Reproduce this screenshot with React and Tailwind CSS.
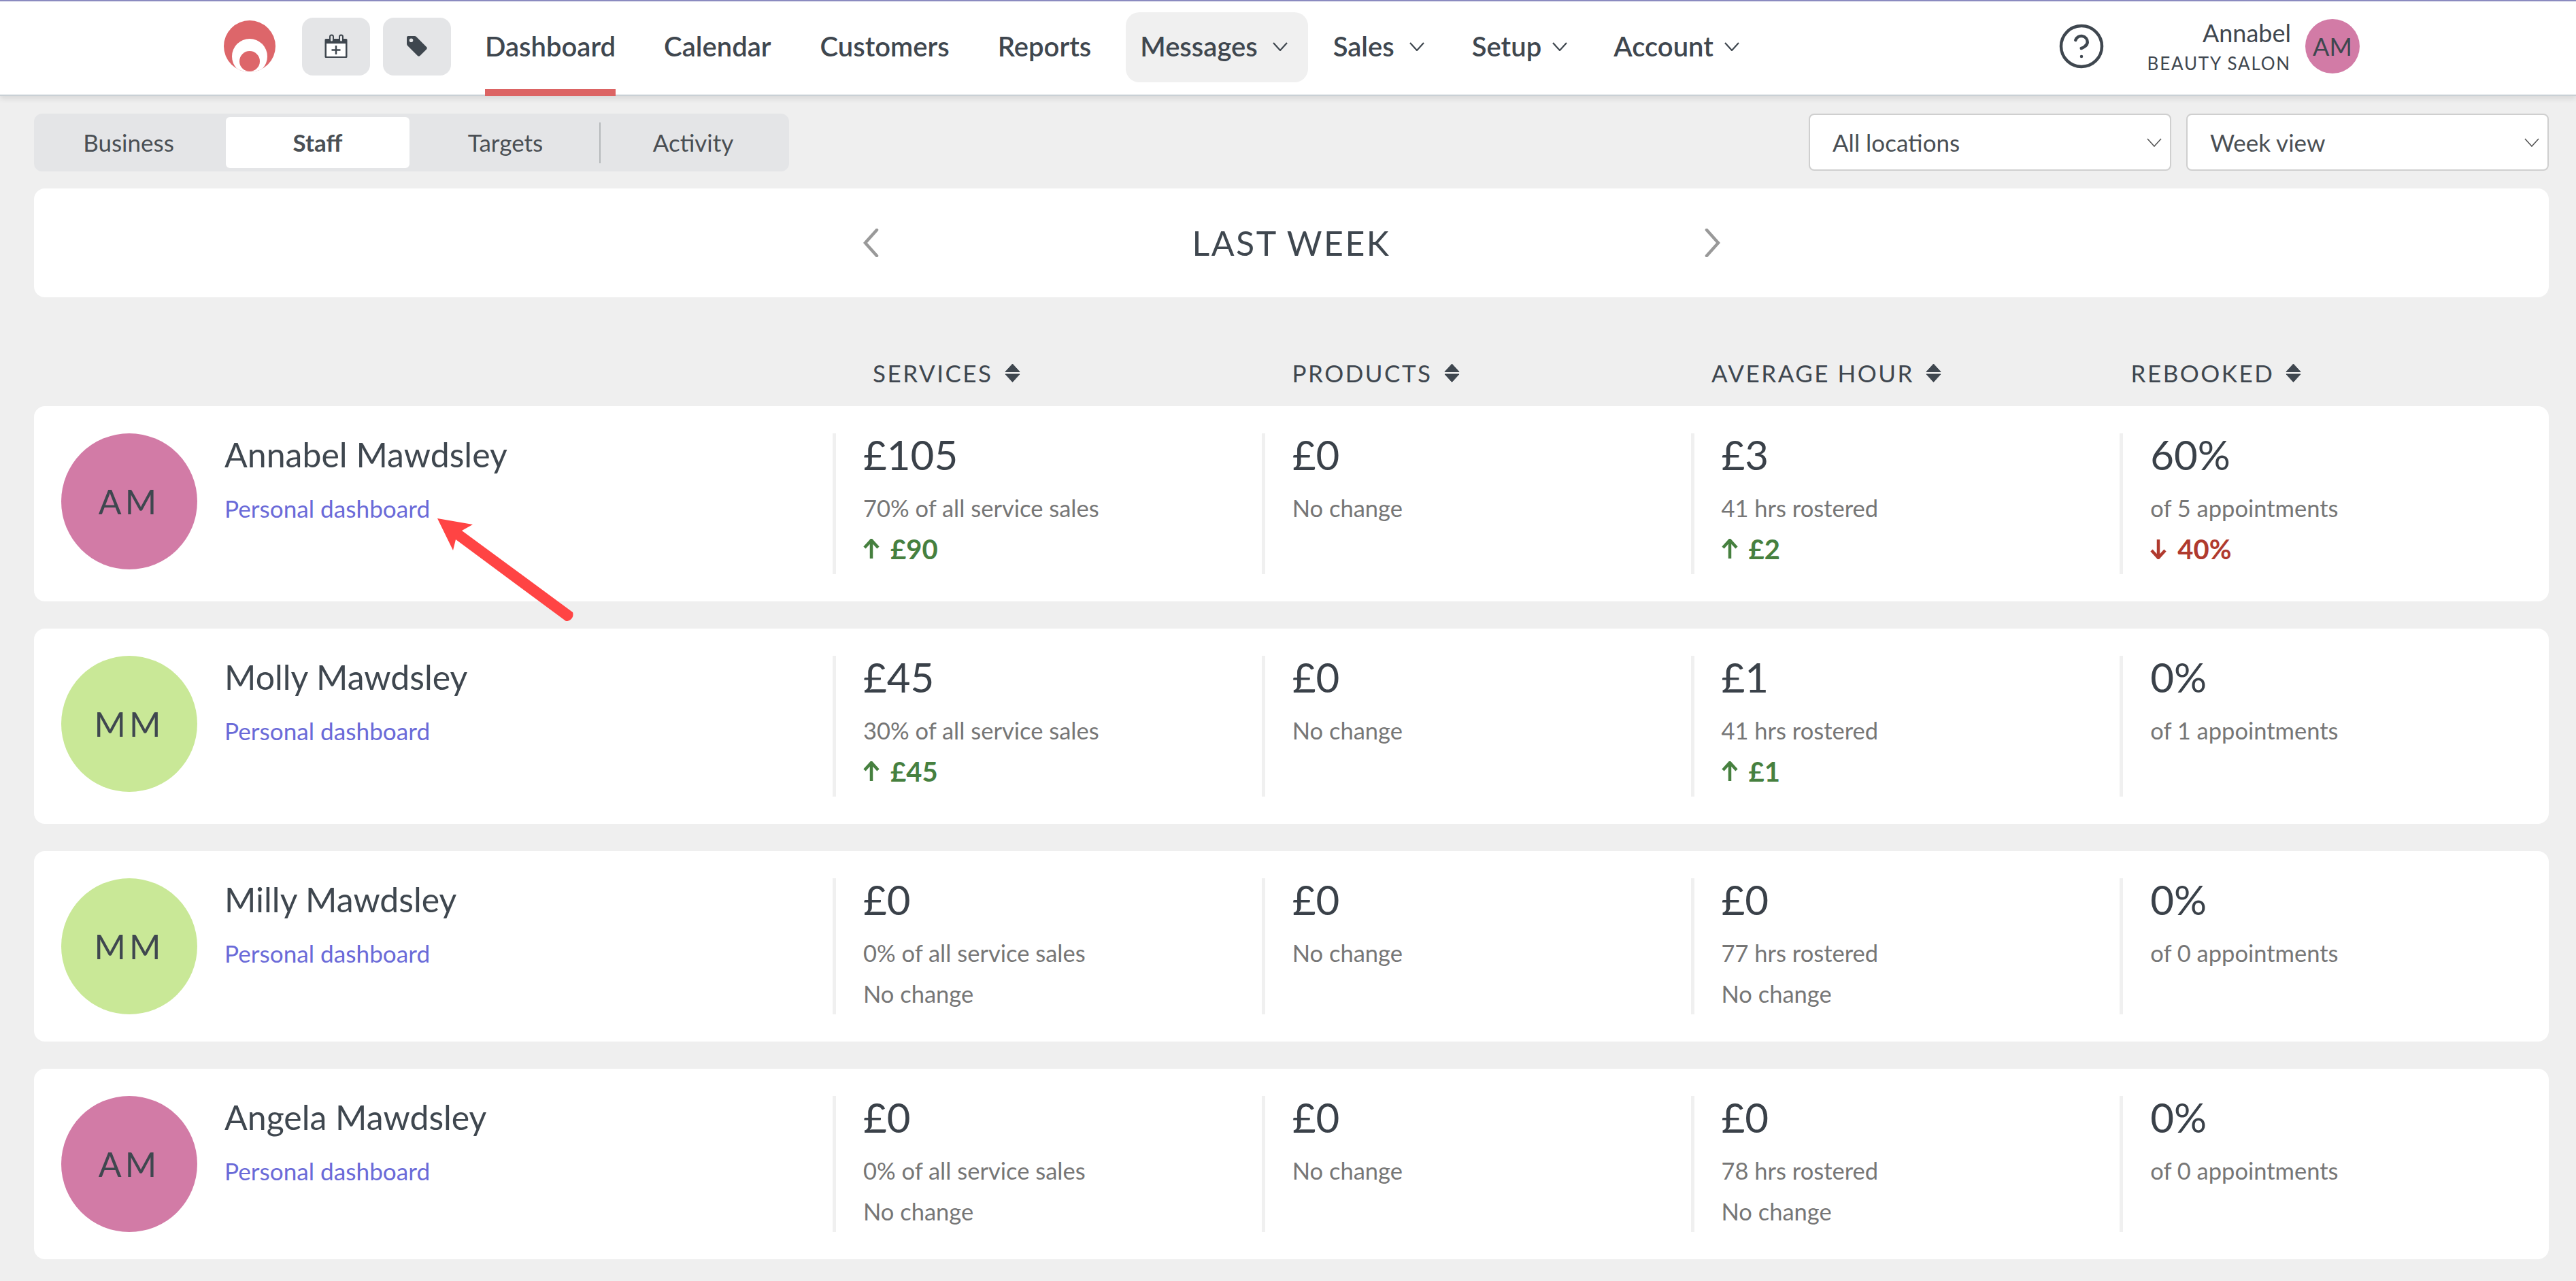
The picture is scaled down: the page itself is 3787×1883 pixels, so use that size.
import { CircleHelp } from 'lucide-react';

const navItems = [
  { label: 'Dashboard', active: true, cls: 'ml-[50px]' },
  { label: 'Calendar', cls: 'ml-[71px]' },
  { label: 'Customers', cls: 'ml-[72px]' },
  { label: 'Reports', cls: 'ml-[71px]' },
  { label: 'Messages', menu: true, hover: true, cls: 'ml-[51px]' },
  { label: 'Sales', menu: true, cls: 'ml-[37px]' },
  { label: 'Setup', menu: true, chevronGap: 'ml-[16px]', cls: 'ml-[70px]' },
  { label: 'Account', menu: true, chevronGap: 'ml-[16px]', cls: 'ml-[68px]' },
];

const pink = 'bg-[#d27ba6]';
const lime = 'bg-[#c9e897]';

const staff = [
  {
    name: 'Annabel Mawdsley', initials: 'AM', color: pink,
    cols: [
      { value: '£105', sub: '70% of all service sales', delta: { dir: 'up', text: '£90' } },
      { value: '£0', sub: 'No change' },
      { value: '£3', sub: '41 hrs rostered', delta: { dir: 'up', text: '£2' } },
      { value: '60%', sub: 'of 5 appointments', delta: { dir: 'down', text: '40%' } },
    ],
  },
  {
    name: 'Molly Mawdsley', initials: 'MM', color: lime,
    cols: [
      { value: '£45', sub: '30% of all service sales', delta: { dir: 'up', text: '£45' } },
      { value: '£0', sub: 'No change' },
      { value: '£1', sub: '41 hrs rostered', delta: { dir: 'up', text: '£1' } },
      { value: '0%', sub: 'of 1 appointments' },
    ],
  },
  {
    name: 'Milly Mawdsley', initials: 'MM', color: lime,
    cols: [
      { value: '£0', sub: '0% of all service sales', note: 'No change' },
      { value: '£0', sub: 'No change' },
      { value: '£0', sub: '77 hrs rostered', note: 'No change' },
      { value: '0%', sub: 'of 0 appointments' },
    ],
  },
  {
    name: 'Angela Mawdsley', initials: 'AM', color: pink,
    cols: [
      { value: '£0', sub: '0% of all service sales', note: 'No change' },
      { value: '£0', sub: 'No change' },
      { value: '£0', sub: '78 hrs rostered', note: 'No change' },
      { value: '0%', sub: 'of 0 appointments' },
    ],
  },
];

function Logo() {
  return (
    <svg width="76" height="76" viewBox="0 0 76 76" className="shrink-0">
      <defs>
        <clipPath id="logo-clip">
          <circle cx="38" cy="38" r="38" />
        </clipPath>
      </defs>
      <g clipPath="url(#logo-clip)">
        <rect width="76" height="76" fill="#dd666a" />
        <circle cx="38" cy="53" r="26" fill="#fff" />
        <circle cx="38" cy="60" r="15" fill="#dd666a" />
      </g>
    </svg>
  );
}

function CalendarPlus() {
  return (
    <svg width="34" height="36" viewBox="0 0 34 36" fill="none">
      <path d="M2 7h30a1.5 1.5 0 0 1 1.5 1.5v25A1.5 1.5 0 0 1 32 35H2a1.5 1.5 0 0 1-1.5-1.5v-25A1.5 1.5 0 0 1 2 7z" fill="#3f474f" />
      <rect x="3" y="14" width="28" height="19" fill="#fff" />
      <rect x="8" y="1.5" width="5" height="10" rx="2.5" fill="#e4e5e7" stroke="#3f474f" strokeWidth="2" />
      <rect x="22" y="1.5" width="5" height="10" rx="2.5" fill="#e4e5e7" stroke="#3f474f" strokeWidth="2" />
      <path d="M17 17v13M10.5 23.5h13" stroke="#3f474f" strokeWidth="2.5" />
    </svg>
  );
}

function Tag() {
  return (
    <svg width="32" height="32" viewBox="0 0 32 32">
      <path
        fillRule="evenodd"
        d="M3 1h9.5c1 0 1.8.4 2.5 1l15 15c1 1 1 2.4 0 3.4L20.4 30c-1 1-2.4 1-3.4 0L2 15c-.6-.7-1-1.500-1-2.500V3a2 2 0 0 1 2-2zm4.500 3.500a2.800 2.800 0 1 0 0 5.600 2.800 2.800 0 0 0 0-5.600z"
        fill="#3f474f"
      />
    </svg>
  );
}

function Chevron({ color = '#3f474f', width = 2.2 }) {
  return (
    <svg width="22" height="13" viewBox="0 0 22 13" fill="none">
      <path d="M1 1l10 11L21 1" stroke={color} strokeWidth={width} />
    </svg>
  );
}

function SortIcon() {
  return (
    <svg width="23" height="28" viewBox="0 0 23 28" className="ml-[17px]">
      <path d="M11.500 1L22 12.500H1z" fill="#3f474f" stroke="#3f474f" strokeLinejoin="round" strokeWidth="1" />
      <path d="M1 16h21L11.500 27.500z" fill="#3f474f" stroke="#3f474f" strokeLinejoin="round" strokeWidth="1" />
    </svg>
  );
}

function Arrow({ dir }) {
  if (dir === 'up') {
    return (
      <svg width="24" height="30" viewBox="0 0 24 30" fill="none" className="mr-[16px]">
        <path d="M12 29V3M2 13L12 2l10 11" stroke="#46803f" strokeWidth="4.5" />
      </svg>
    );
  }
  return (
    <svg width="24" height="30" viewBox="0 0 24 30" fill="none" className="mr-[16px]">
      <path d="M12 1v26M2 17l10 11 10-11" stroke="#b03a2e" strokeWidth="4.5" />
    </svg>
  );
}

function Select({ label, cls }) {
  return (
    <div className={`flex h-[84px] w-[533px] items-center justify-between rounded-[8px] border-2 border-[#cfcfcf] bg-white pl-[33px] pr-[12px] text-[35px] text-[#4a4f54] ${cls}`}>
      <span>{label}</span>
      <Chevron color="#555555" width={1.6} />
    </div>
  );
}

function Column({ value, sub, delta, note }) {
  return (
    <div className="border-l-[5px] border-[#f0f0f0] pl-[40px]">
      <div className="text-[60px] leading-[62px] text-[#3a4149]">{value}</div>
      <div className="mt-[18px] text-[34.5px] leading-[60px] text-[#767676]">{sub}</div>
      {delta && (
        <div className={`flex h-[67px] items-start text-[40px] leading-[60px] font-bold ${delta.dir === 'up' ? 'text-[#46803f]' : 'text-[#b03a2e]'}`}>
          <span className="flex h-[60px] items-center"><Arrow dir={delta.dir} /></span>
          {delta.text}
        </div>
      )}
      {note && <div className="text-[34.5px] leading-[60px] text-[#767676]">{note}</div>}
    </div>
  );
}

function StaffRow({ person }) {
  return (
    <div className="flex rounded-[16px] bg-white py-[40px] pl-[40px]">
      <div className="flex w-[1134px] shrink-0">
        <div className={`flex h-[200px] w-[200px] items-center justify-center rounded-full text-[50px] tracking-[5px] text-[#3f474f] ${person.color}`}>
          {person.initials}
        </div>
        <div className="ml-[40px]">
          <div className="text-[50px] leading-[62px] text-[#3f474f]">{person.name}</div>
          <div className="mt-[18px] text-[35.2px] leading-[60px] text-[#6a6ad8]">Personal dashboard</div>
        </div>
      </div>
      <div className="grid flex-1 grid-cols-4">
        {person.cols.map((col, i) => (
          <Column key={i} {...col} />
        ))}
      </div>
    </div>
  );
}

export default function App() {
  return (
    <div className="relative min-h-[1883px] overflow-hidden bg-[#efefef] font-['Lato','Open_Sans',sans-serif] text-[#3f474f]">
      <header className="relative flex h-[141px] items-center border-t-2 border-[#8b8bc0] border-b-2 border-b-[#c9d0d5] bg-white pb-[5px] pl-[329px] shadow-[0_4px_8px_rgba(0,0,0,0.1)]">
        <Logo />
        <div className="ml-[39px] flex h-[85px] w-[100px] items-center justify-center rounded-[16px] bg-[#e4e5e7]">
          <CalendarPlus />
        </div>
        <div className="ml-[19px] flex h-[85px] w-[100px] items-center justify-center rounded-[16px] bg-[#e4e5e7]">
          <Tag />
        </div>
        <nav className="flex h-full items-center text-[40px] font-semibold">
          {navItems.map((item) => (
            <div
              key={item.label}
              className={`relative flex items-center ${item.cls} ${item.hover ? 'mt-[3px] h-[103px] rounded-[20px] bg-[#f0f0f0] pb-[3px] pl-[21px] pr-[30px]' : ''}`}
            >
              {item.label}
              {item.menu && (
                <span className={`flex ${item.chevronGap || 'ml-[22px]'}`}>
                  <Chevron />
                </span>
              )}
              {item.active && <span className="absolute -bottom-[43px] left-0 h-[10px] w-full bg-[#dc6464]" />}
            </div>
          ))}
        </nav>
        <div className="ml-auto mr-[318px] flex items-center">
          <CircleHelp size={72} strokeWidth={1.5} color="#3f474f" />
          <div className="ml-[61px] text-right">
            <div className="text-[36px] leading-[42px]">Annabel</div>
            <div className="mt-[8px] text-[26px] leading-[32px] tracking-[1.800px]">BEAUTY SALON</div>
          </div>
          <div className={`ml-[21px] flex h-[80px] w-[80px] items-center justify-center rounded-full text-[36px] ${pink}`}>AM</div>
        </div>
      </header>

      <main className="pl-[50px] pr-[40px]">
        <div className="mt-[26px] flex items-start justify-between">
          <div className="flex h-[85px] w-[1110px] items-center rounded-[12px] bg-[#e4e5e7] p-[5px] text-[35px] text-[#4a4f54]">
            <div className="flex w-[277px] justify-center pr-[9px]">Business</div>
            <div className="flex h-[75px] w-[270px] items-center justify-center rounded-[6px] bg-white font-bold">Staff</div>
            <div className="flex h-[60px] w-[281px] items-center justify-center border-r-2 border-[#b5b8bb] pl-[3px]">Targets</div>
            <div className="flex flex-1 justify-center">Activity</div>
          </div>
          <div className="flex">
            <Select label="All locations" />
            <Select label="Week view" cls="ml-[22px]" />
          </div>
        </div>

        <div className="mt-[25px] flex h-[160px] items-center justify-center rounded-[16px] bg-white">
          <svg width="24" height="42" viewBox="0 0 24 42" fill="none">
            <path d="M21 2L4 21l17 19" stroke="#999999" strokeWidth="4.5" strokeLinecap="round" />
          </svg>
          <div className="w-[1214px] text-center text-[50px] tracking-[2.500px]">LAST WEEK</div>
          <svg width="24" height="42" viewBox="0 0 24 42" fill="none">
            <path d="M3 2l17 19L3 40" stroke="#999999" strokeWidth="4.5" strokeLinecap="round" />
          </svg>
        </div>

        <div className="ml-[1233px] grid h-[160px] w-[2466px] grid-cols-4 items-center pt-[62px] text-[35px] tracking-[2.500px]">
          {['SERVICES', 'PRODUCTS', 'AVERAGE HOUR', 'REBOOKED'].map((h) => (
            <div key={h} className="flex items-center">
              {h}
              <SortIcon />
            </div>
          ))}
        </div>

        <div className="flex flex-col gap-[40px]">
          {staff.map((person) => (
            <StaffRow key={person.name} person={person} />
          ))}
        </div>
      </main>

      <svg width="230" height="170" viewBox="0 0 230 170" className="absolute left-[630px] top-[750px]">
        <path d="M13 12L65 21 49 30 212 150C214 156 210 163 202 163L40 43 36 59z" fill="#ff4444" />
      </svg>
    </div>
  );
}
